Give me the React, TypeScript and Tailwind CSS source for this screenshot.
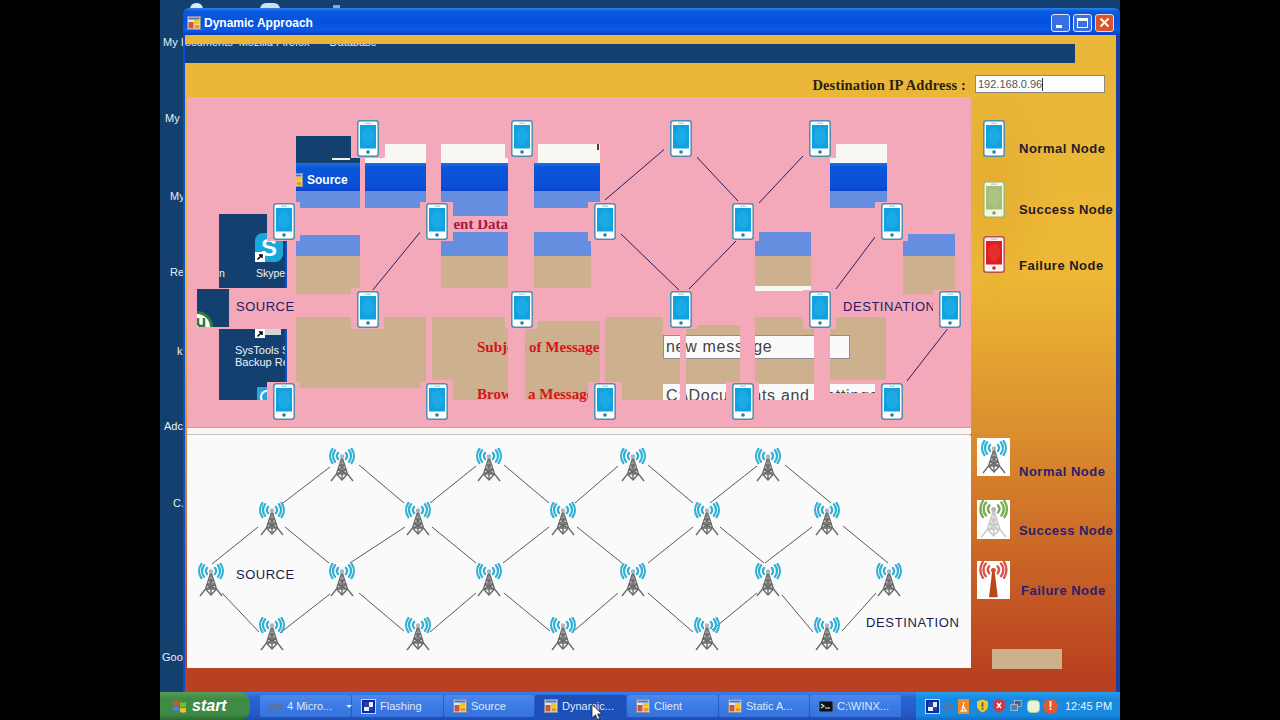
import React from "react";

const PHONE_COLORS = {
  blue: { edge: "#4b8fae", body: "#ffffff", screen: "#10a2e0", glow: "#2cb6ea", dot: "#1f7f9f" },
  green: { edge: "#a3b56e", body: "#f3f8e0", screen: "#a6bf78", glow: "#b9cc90", dot: "#88996a" },
  red: { edge: "#b9524a", body: "#fff2f0", screen: "#dc1f22", glow: "#ee4a40", dot: "#b9323a" },
};

function Phone({ tone = "blue" }: { tone?: "blue" | "green" | "red" }) {
  const c = PHONE_COLORS[tone];
  return (
    <svg width="22" height="37" viewBox="0 0 22 37" className="block shrink-0">
      <rect x="0.8" y="0.8" width="20.4" height="35.4" rx="2.5" fill={c.body} stroke={c.edge} strokeWidth="1.5" />
      <rect x="3" y="5" width="16" height="23.5" fill={c.screen} />
      <ellipse cx="11" cy="16.5" rx="6" ry="9" fill={c.glow} opacity="0.4" />
      <rect x="8" y="2.7" width="6" height="0.9" fill="#9fb7c2" />
      <circle cx="11" cy="32" r="1.8" fill={c.dot} />
    </svg>
  );
}

function Tower({ tone = "blue", size = 1 }: { tone?: "blue" | "green" | "red"; size?: number }) {
  const arc = tone === "blue" ? "#30b0d4" : tone === "green" ? "#79ad55" : "#d9534f";
  const steel = tone === "blue" ? "#6a6a6a" : tone === "green" ? "#c9c9c9" : "#b8481c";
  return (
    <svg width={28 * size} height={34 * size} viewBox="0 0 28 34" className="block">
      <g fill="none" stroke={arc} strokeWidth="2.2" strokeLinecap="round">
        <path d="M10.2 4.8A5 5 0 0 0 10.2 11.2" />
        <path d="M7.1 2.2A9 9 0 0 0 7.1 13.8" />
        <path d="M4.4 0.8A12.5 12.5 0 0 0 4.4 15.2" />
        <path d="M17.8 4.8A5 5 0 0 1 17.8 11.2" />
        <path d="M20.9 2.2A9 9 0 0 1 20.9 13.8" />
        <path d="M23.6 0.8A12.5 12.5 0 0 1 23.6 15.2" />
      </g>
      {tone === "red" ? (
        <path d="M12.8 10H15.2L18 33H10Z" fill={steel} />
      ) : (
        <g fill="none" stroke={steel} strokeWidth="1.4">
          <path d="M14 9L8.5 26L3 33" />
          <path d="M14 9L19.5 26L25 33" />
          <path d="M14 10V32" />
          <path d="M11.4 17H16.6M10 22H18M8.5 26H19.5" />
          <path d="M11.4 17L18 22M16.6 17L10 22M10 22L19.5 26M18 22L8.5 26M8.5 26L14 32L19.5 26" />
        </g>
      )}
      <circle cx="14" cy="8.5" r="2.2" fill={tone === "red" ? "#c9501e" : "#b4b4b4"} />
    </svg>
  );
}

function AppIcon() {
  return (
    <svg width="14" height="14" viewBox="0 0 14 14" className="block shrink-0">
      <rect x="0.5" y="0.5" width="13" height="13" fill="#dfe6f2" stroke="#7f8fa8" />
      <rect x="1.5" y="1.5" width="11" height="2" fill="#4a70b8" />
      <rect x="7" y="4" width="5.5" height="4.5" fill="#f6c21c" />
      <rect x="1.5" y="6" width="5" height="6.5" fill="#c9573a" />
      <rect x="7.5" y="9" width="5" height="3.5" fill="#e8962e" />
    </svg>
  );
}

function BlueBoxIcon() {
  return (
    <svg width="15" height="15" viewBox="0 0 15 15" className="block shrink-0">
      <rect x="0.5" y="0.5" width="14" height="14" fill="#0a2aa8" stroke="#c7d6f6" />
      <rect x="3" y="3" width="9" height="9" fill="#e9eefb" />
      <rect x="3" y="3" width="5" height="5" fill="#2a3f9c" />
      <rect x="8" y="8" width="4" height="4" fill="#2a3f9c" />
    </svg>
  );
}

function Glasses({ width = 14 }: { width?: number }) {
  return (
    <svg width={width} height="9" viewBox="0 0 14 9" className="block shrink-0">
      <g fill="none" stroke="#5f7192" strokeWidth="1.8">
        <circle cx="4" cy="5" r="2.6" />
        <circle cx="10.4" cy="4.4" r="2.6" />
      </g>
    </svg>
  );
}

function TaskButton({ w, active, icon, label, arrow }: { w: string; active?: boolean; icon: React.ReactNode; label: string; arrow?: boolean }) {
  return (
    <div
      className={`${w} h-[22px] rounded-[2px] flex items-center gap-[4px] pl-[9px] text-[11px] text-[#dfe8fb] shrink-0 ${
        active ? "bg-[#1d4fb8]" : "bg-[linear-gradient(180deg,#4a88ec_0%,#3c7be4_50%,#3672dc_100%)]"
      }`}
    >
      {icon}
      <span className="whitespace-nowrap">{label}</span>
      {arrow && <span className="ml-[10px] w-0 h-0 border-l-[3px] border-r-[3px] border-t-[3px] border-l-transparent border-r-transparent border-t-[#dfe8fb]" />}
    </div>
  );
}

const RECTS = [
  "left-[32px] top-[117px] w-[68px] h-[74px] bg-[#14406f] border-r-2 border-[#0a50c8]",
  "left-[10px] top-[192px] w-[32px] h-[38px] bg-[#14406f]",
  "left-[32px] top-[232px] w-[68px] h-[71px] bg-[#14406f] border-r-2 border-[#0a50c8]",
  "left-[109px] top-[39px] w-[55px] h-[27px] bg-[#14406f]",
  "left-[164px] top-[60px] w-[9px] h-[6px] bg-[#14406f]",
  "left-[198px] top-[47px] w-[41px] h-[19px] bg-[#f8f7f4]",
  "left-[178px] top-[60px] w-[20px] h-[6px] bg-[#f8f7f4]",
  "left-[254px] top-[47px] w-[67px] h-[19px] bg-[#f8f7f4]",
  "left-[351px] top-[47px] w-[62px] h-[19px] bg-[#f8f7f4]",
  "left-[649px] top-[47px] w-[51px] h-[19px] bg-[#f8f7f4]",
  "left-[643px] top-[60px] w-[6px] h-[6px] bg-[#f8f7f4]",
  "left-[109px] top-[66px] w-[64px] h-[28px] bg-[linear-gradient(180deg,#1f72ea_0%,#0a56d8_15%,#0a50d8_80%,#0a45c8_100%)]",
  "left-[178px] top-[66px] w-[61px] h-[28px] bg-[linear-gradient(180deg,#1f72ea_0%,#0a56d8_15%,#0a50d8_80%,#0a45c8_100%)]",
  "left-[254px] top-[66px] w-[67px] h-[28px] bg-[linear-gradient(180deg,#1f72ea_0%,#0a56d8_15%,#0a50d8_80%,#0a45c8_100%)]",
  "left-[347px] top-[66px] w-[66px] h-[28px] bg-[linear-gradient(180deg,#1f72ea_0%,#0a56d8_15%,#0a50d8_80%,#0a45c8_100%)]",
  "left-[643px] top-[66px] w-[57px] h-[28px] bg-[linear-gradient(180deg,#1f72ea_0%,#0a56d8_15%,#0a50d8_80%,#0a45c8_100%)]",
  "left-[109px] top-[94px] w-[64px] h-[17px] bg-[#668ee0]",
  "left-[178px] top-[94px] w-[61px] h-[17px] bg-[#668ee0]",
  "left-[254px] top-[94px] w-[67px] h-[17px] bg-[#668ee0]",
  "left-[265px] top-[111px] w-[56px] h-[8px] bg-[#668ee0]",
  "left-[347px] top-[94px] w-[66px] h-[17px] bg-[#668ee0]",
  "left-[643px] top-[94px] w-[57px] h-[17px] bg-[#668ee0]",
  "left-[109px] top-[138px] w-[64px] h-[21px] bg-[#668ee0]",
  "left-[254px] top-[135px] w-[67px] h-[24px] bg-[#668ee0]",
  "left-[347px] top-[135px] w-[57px] h-[24px] bg-[#668ee0]",
  "left-[568px] top-[135px] w-[56px] h-[24px] bg-[#668ee0]",
  "left-[716px] top-[137px] w-[52px] h-[22px] bg-[#668ee0]",
  "left-[109px] top-[159px] w-[64px] h-[32px] bg-[#cdb08e]",
  "left-[109px] top-[191px] w-[55px] h-[6px] bg-[#cdb08e]",
  "left-[254px] top-[159px] w-[67px] h-[32px] bg-[#cdb08e]",
  "left-[347px] top-[159px] w-[57px] h-[32px] bg-[#cdb08e]",
  "left-[568px] top-[159px] w-[56px] h-[30px] bg-[#cdb08e]",
  "left-[568px] top-[189px] w-[56px] h-[5px] bg-[#f8f7f4]",
  "left-[716px] top-[159px] w-[52px] h-[38px] bg-[#cdb08e]",
  "left-[109px] top-[220px] w-[130px] h-[71px] bg-[#cdb08e]",
  "left-[245px] top-[220px] w-[76px] h-[63px] bg-[#cdb08e]",
  "left-[265px] top-[283px] w-[56px] h-[20px] bg-[#cdb08e]",
  "left-[338px] top-[224px] w-[75px] h-[79px] bg-[#cdb08e]",
  "left-[418px] top-[220px] w-[58px] h-[66px] bg-[#cdb08e]",
  "left-[435px] top-[262px] w-[58px] h-[41px] bg-[#cdb08e]",
  "left-[499px] top-[228px] w-[54px] h-[75px] bg-[#cdb08e]",
  "left-[568px] top-[220px] w-[59px] h-[83px] bg-[#cdb08e]",
  "left-[643px] top-[220px] w-[56px] h-[63px] bg-[#cdb08e]",
];

const STRIPS = [
  "left-[321px] top-[220px] w-[17px] h-[83px]",
  "left-[493px] top-[231px] w-[6px] h-[72px]",
  "left-[553px] top-[220px] w-[15px] h-[83px]",
  "left-[627px] top-[220px] w-[16px] h-[83px]",
  "left-[643px] top-[296px] w-[46px] h-[7px]",
];

const PHONES: [number, number][] = [
  [367, 138], [521, 138], [680, 138], [819, 138],
  [283, 221], [436, 221], [604, 221], [742, 221], [891, 221],
  [367, 309], [521, 309], [680, 309], [819, 309], [949, 309],
  [283, 401], [436, 401], [604, 401], [742, 401], [891, 401],
];

const PHONE_LINES = [
  [372, 291, 426, 225], [605, 200, 667, 147], [693, 153, 738, 201], [759, 203, 803, 156],
  [620, 233, 680, 291], [737, 240, 689, 289], [875, 237, 836, 289], [949, 327, 907, 381],
];

const TOWERS: [number, number][] = [
  [342, 465], [489, 465], [633, 465], [768, 465],
  [272, 519], [418, 519], [563, 519], [707, 519], [827, 519],
  [211, 580], [342, 580], [489, 580], [633, 580], [768, 580], [889, 580],
  [272, 634], [418, 634], [563, 634], [707, 634], [827, 634],
];

const TOWER_LINES = [
  [283, 503, 330, 467], [359, 465, 404, 503], [430, 503, 476, 466], [504, 465, 549, 503],
  [575, 503, 618, 466], [648, 465, 693, 503], [710, 503, 757, 466], [785, 465, 831, 503],
  [212, 564, 258, 527], [285, 527, 329, 563], [350, 563, 405, 527], [432, 527, 476, 563],
  [503, 563, 549, 527], [577, 527, 622, 563], [648, 563, 693, 527], [720, 527, 764, 563],
  [765, 563, 812, 527], [843, 526, 888, 563],
  [222, 593, 259, 632], [280, 633, 330, 594], [359, 593, 404, 631], [430, 632, 476, 593],
  [504, 593, 550, 631], [575, 630, 618, 593], [648, 593, 693, 632], [712, 630, 757, 593],
  [782, 595, 813, 632], [842, 631, 876, 593],
];

const SIDE_LABELS: [number, number, string][] = [
  [3, 35, "My I"],
  [5, 111, "My"],
  [10, 189, "My"],
  [10, 265, "Re"],
  [17, 344, "k"],
  [4, 419, "Adc"],
  [13, 496, "C."],
  [2, 650, "Goo"],
];

export default function App() {
  return (
    <div className="w-[1280px] h-[720px] bg-black flex justify-center overflow-hidden font-['Liberation_Sans',sans-serif]">
      <div className="w-[960px] h-[720px] flex flex-col relative">
        {/* desktop with the window on it */}
        <div className="relative h-[692px] bg-[#14406f] overflow-hidden">
          <div className="absolute left-[30px] top-[3px] w-[13px] h-[6px] rounded-t-full bg-[#dfe8f0]" />
          <div className="absolute left-[100px] top-[3px] w-[20px] h-[6px] rounded-t-full bg-[#cfdfee]" />
          <div className="absolute left-[173px] top-[5px] w-[7px] h-[4px] bg-[#8fa8c4]" />
          {SIDE_LABELS.map(([left, top, text]) => (
            <span key={top} style={{ left, top }} className="absolute text-[11px] leading-[14px] text-[#e8eef6]">
              {text}
            </span>
          ))}

          <div className="absolute left-[23px] top-[8px] w-[937px] h-[684px] flex flex-col">
            {/* title bar */}
            <div className="h-[27px] shrink-0 rounded-t-[6px] flex items-center pt-[3px] pl-[4px] pr-[6px] bg-[linear-gradient(180deg,#2a80f0_0%,#0a5be0_12%,#0551dd_50%,#0a5ae8_80%,#0a3fc0_100%)]">
              <AppIcon />
              <span className="ml-[3px] text-[12px] font-bold text-white">Dynamic Approach</span>
              <div className="ml-auto flex gap-[3px] -mt-[1px]">
                <div className="relative w-[19px] h-[18px] rounded-[3px] border border-[#dfe8fb] bg-[#3a6fe0]">
                  <div className="absolute left-[4px] bottom-[3px] w-[6px] h-[3px] bg-white" />
                </div>
                <div className="w-[19px] h-[18px] rounded-[3px] border border-[#dfe8fb] bg-[#3a6fe0] flex items-center justify-center">
                  <div className="w-[11px] h-[10px] border border-white border-t-[3px]" />
                </div>
                <div className="w-[19px] h-[18px] rounded-[3px] border border-[#f0d8d0] bg-[#d9552e] flex items-center justify-center">
                  <svg width="11" height="11" viewBox="0 0 11 11">
                    <path d="M1.5 1.5L9.5 9.5M9.5 1.5L1.5 9.5" stroke="#fff" strokeWidth="2" />
                  </svg>
                </div>
              </div>
            </div>

            {/* window body */}
            <div className="flex-1 flex flex-col border-l-2 border-r-4 border-l-[#0a4fd8] border-r-[#1b3ea0] bg-[linear-gradient(180deg,#e9b63a_0%,#edb835_37%,#db8f2e_60%,#cc6a28_77%,#b9411f_97%)]">
              <div className="h-[9px] shrink-0" />
              <div className="h-[19px] w-[890px] shrink-0 bg-[#14406f] overflow-hidden text-[11px] leading-[14px] text-[#e8eef6] flex">
                <span className="-mt-[9px]">ocuments</span>
                <span className="-mt-[9px] ml-[6px]">Mozilla Firefox</span>
                <span className="-mt-[9px] ml-[20px]">Database</span>
              </div>

              <div className="h-[34px] shrink-0 flex justify-end items-center pt-[8px] pr-[11px]">
                <span className="mt-[3px] font-['Liberation_Serif',serif] font-bold text-[14.5px] tracking-[0.15px] text-[#2a1f10]">Destination IP Address :</span>
                <div className="ml-[9px] w-[130px] h-[18px] bg-white border border-[#8a8a80] flex items-center pl-[2px] text-[11px] text-[#555]">
                  192.168.0.96<span className="w-px h-[13px] bg-[#333]" />
                </div>
              </div>

              <div className="flex-1 flex">
                {/* left column: the two diagrams */}
                <div className="ml-[2px] w-[784px] shrink-0 flex flex-col">
                  <div className="relative h-[330px] shrink-0 bg-[#f4a9bb] overflow-hidden">
                    {RECTS.map((c) => (
                      <div key={c} className={`absolute ${c}`} />
                    ))}

                    {/* leftovers of the Source form */}
                    <div className="absolute left-[109px] top-[69px] h-[28px] flex items-center gap-[2px]">
                      <div className="w-[7px] h-[14px] overflow-hidden flex justify-end"><AppIcon /></div>
                      <span className="ml-[2px] text-[12px] font-bold text-white">Source</span>
                    </div>
                    <div className="absolute left-[145px] top-[61px] w-[18px] h-[2px] bg-[#f0f0e8]" />
                    <div className="absolute left-[410px] top-[47px] w-[2px] h-[6px] bg-[#6a3a20]" />

                    {/* desktop icons seen through */}
                    <div className="absolute left-[68px] top-[136px] w-[28px] h-[29px] rounded-[8px] bg-[#1aa7d9] flex items-center justify-center text-white font-bold text-[24px] leading-none">S</div>
                    <div className="absolute left-[68px] top-[155px] w-[10px] h-[10px] bg-white flex items-center justify-center">
                      <svg width="8" height="8" viewBox="0 0 8 8"><path d="M1.5 6.5L5.5 2.5M3 2H6V5" stroke="#000" strokeWidth="1.5" fill="none" /></svg>
                    </div>
                    <span className="absolute left-[69px] top-[169px] text-[10.5px] leading-[14px] text-[#eef3f8]">Skype</span>
                    <span className="absolute left-[32px] top-[169px] text-[10.5px] leading-[14px] text-[#eef3f8]">n</span>
                    <div className="absolute left-[72px] top-[232px] w-[22px] h-[6px] bg-[#cfd6dc]" />
                    <div className="absolute left-[68px] top-[232px] w-[10px] h-[9px] bg-white flex items-center justify-center">
                      <svg width="8" height="8" viewBox="0 0 8 8"><path d="M1.5 6.5L5.5 2.5M3 2H6V5" stroke="#000" strokeWidth="1.5" fill="none" /></svg>
                    </div>
                    <div className="absolute left-[48px] top-[247px] w-[50px] overflow-hidden text-[11px] leading-[12px] text-[#eef3f8] whitespace-nowrap text-right">SysTools S</div>
                    <div className="absolute left-[48px] top-[259px] w-[50px] overflow-hidden text-[11px] leading-[12px] text-[#eef3f8] whitespace-nowrap text-right">Backup Rec</div>
                    <div className="absolute left-[70px] top-[290px] w-[11px] h-[13px] bg-[#2aa4e0] overflow-hidden">
                      <div className="w-[14px] h-[14px] rounded-full border-2 border-white ml-[3px] mt-[3px]" />
                    </div>
                    <svg className="absolute left-[10px] top-[212px]" width="16" height="18" viewBox="0 0 16 18">
                      <circle cx="0" cy="18" r="14.5" fill="#fff" stroke="#2f7d3c" strokeWidth="3" />
                      <path d="M1 9V14Q1 17 4 17H7V9" fill="none" stroke="#2f7d3c" strokeWidth="2.5" />
                    </svg>

                    {/* red form labels, cut by the strips */}
                    <div className="absolute left-[265px] top-[123px] w-[56px] h-[10px] overflow-hidden">
                      <span className="absolute right-0 -top-[4px] whitespace-nowrap font-['Liberation_Serif',serif] font-bold text-[15px] leading-[16px] text-[#a81840]">Recipient Data</span>
                    </div>
                    <div className="absolute left-[290px] top-[191px] w-[28px] h-[3px] overflow-hidden">
                      <span className="absolute left-0 top-0 whitespace-nowrap font-['Liberation_Serif',serif] font-bold text-[15px] leading-[16px] text-[#d8121c]">Destinat</span>
                    </div>
                    <div className="absolute left-[366px] top-[191px] w-[36px] h-[3px] overflow-hidden">
                      <span className="absolute right-0 top-0 whitespace-nowrap font-['Liberation_Serif',serif] font-bold text-[15px] leading-[16px] text-[#d8121c]">IP Add</span>
                    </div>
                    <span className="absolute left-[290px] top-[242px] whitespace-nowrap font-['Liberation_Serif',serif] font-bold text-[15px] leading-[16px] text-[#d8121c]">Subject of Message</span>
                    <span className="absolute left-[290px] top-[289px] whitespace-nowrap font-['Liberation_Serif',serif] font-bold text-[15px] leading-[16px] text-[#d8121c]">Browse a Message</span>

                    {/* inputs */}
                    <div className="absolute left-[476px] top-[238px] w-[187px] h-[24px] bg-[#fafafa] border border-[#8d8d96] pl-[2px] text-[16px] leading-[22px] tracking-[0.7px] text-[#444]">new message</div>
                    <div className="absolute left-[476px] top-[287px] w-[212px] h-[16px] bg-[#fafafa] overflow-hidden pl-[3px] pt-[3px] text-[16px] leading-[18px] tracking-[0.7px] text-[#444] whitespace-nowrap">C:\Documents and Settings</div>

                    {STRIPS.map((c) => (
                      <div key={c} className={`absolute bg-[#f4a9bb] ${c}`} />
                    ))}

                    <span className="absolute left-[49px] top-[202px] text-[13px] leading-[16px] tracking-[0.5px] text-[#251a60]">SOURCE</span>
                    <span className="absolute left-[656px] top-[202px] whitespace-nowrap text-[13px] leading-[16px] tracking-[0.55px] text-[#251a60]">DESTINATION</span>

                    <svg className="absolute left-0 top-0" width="784" height="330" viewBox="187 97 784 330">
                      {PHONE_LINES.map((l) => (
                        <line key={l.join()} x1={l[0]} y1={l[1]} x2={l[2]} y2={l[3]} stroke="#2a1a5a" strokeWidth="1" />
                      ))}
                    </svg>

                    {PHONES.map(([x, y]) => (
                      <div
                        key={`${x}-${y}`}
                        style={{ left: x - 187 - 16, top: y - 97 - 19 }}
                        className="absolute w-[33px] h-[39px] pl-[6px] bg-[#f4a9bb] flex items-center"
                      >
                        <Phone />
                      </div>
                    ))}
                  </div>

                  <div className="h-px shrink-0 bg-[#e0a060]" />
                  <div className="h-[6px] shrink-0 bg-[#fbf5ee]" />

                  <div className="relative h-[234px] shrink-0 bg-[#fafafa] border-t border-[#c4c4c0] rounded-tr-[3px]">
                    <svg className="absolute left-0 top-0" width="784" height="233" viewBox="187 435 784 233">
                      {TOWER_LINES.map((l) => (
                        <line key={l.join()} x1={l[0]} y1={l[1]} x2={l[2]} y2={l[3]} stroke="#5a5a5a" strokeWidth="1" />
                      ))}
                    </svg>
                    {TOWERS.map(([x, y]) => (
                      <div key={`${x}-${y}`} style={{ left: x - 187 - 14, top: y - 434 - 18 }} className="absolute">
                        <Tower />
                      </div>
                    ))}
                    <span className="absolute left-[49px] top-[132px] text-[13px] leading-[16px] tracking-[0.5px] text-[#1a1a50]">SOURCE</span>
                    <span className="absolute left-[679px] top-[180px] whitespace-nowrap text-[13px] leading-[16px] tracking-[0.65px] text-[#1a1a50]">DESTINATION</span>
                  </div>
                </div>

                {/* right column: legends */}
                <div className="flex-1 flex flex-col bg-[radial-gradient(ellipse_60px_120px_at_22px_90px,rgba(190,120,30,0.16),transparent)]">
                  <div className="mt-[23px] ml-[12px] h-[37px] flex gap-[14px]">
                    <Phone />
                    <span className="self-end font-bold text-[13px] leading-[16px] tracking-[0.5px] text-[#241a28]">Normal Node</span>
                  </div>
                  <div className="mt-[24px] ml-[12px] h-[37px] flex gap-[14px]">
                    <Phone tone="green" />
                    <span className="self-end font-bold text-[13px] leading-[16px] tracking-[0.45px] text-[#241a28] whitespace-nowrap">Success Node</span>
                  </div>
                  <div className="mt-[18px] ml-[12px] h-[38px] flex gap-[14px]">
                    <Phone tone="red" />
                    <span className="self-end font-bold text-[13px] leading-[16px] tracking-[0.5px] text-[#241a28]">Failure Node</span>
                  </div>

                  <div className="mt-[164px] ml-[6px] h-[42px] flex gap-[9px]">
                    <div className="w-[33px] h-[38px] bg-white flex items-center justify-center shrink-0"><Tower /></div>
                    <span className="self-end font-bold text-[13px] leading-[16px] tracking-[0.5px] text-[#2a1f6a]">Normal Node</span>
                  </div>
                  <div className="mt-[20px] ml-[6px] h-[39px] flex gap-[9px]">
                    <div className="w-[33px] h-[39px] bg-white flex items-center justify-center shrink-0"><Tower tone="green" size={1.12} /></div>
                    <span className="self-end font-bold text-[13px] leading-[16px] tracking-[0.45px] text-[#2a1f6a] whitespace-nowrap">Success Node</span>
                  </div>
                  <div className="mt-[22px] ml-[6px] h-[38px] flex gap-[11px]">
                    <div className="w-[33px] h-[38px] bg-white flex items-center justify-center shrink-0"><Tower tone="red" size={1.1} /></div>
                    <span className="self-end font-bold text-[13px] leading-[16px] tracking-[0.5px] text-[#2a1f6a]">Failure Node</span>
                  </div>

                  <div className="mt-[50px] ml-[21px] w-[70px] h-[20px] bg-[#cdb08e]" />
                </div>
              </div>
            </div>
          </div>
        </div>

        {/* taskbar */}
        <div className="h-[28px] shrink-0 flex items-center bg-[linear-gradient(180deg,#3f7fe8_0%,#2a62d4_20%,#2558c8_80%,#1f4cb0_100%)]">
          <div className="w-[90px] h-[28px] shrink-0 rounded-r-[10px] flex items-center pl-[12px] gap-[5px] bg-[linear-gradient(180deg,#5a9a5a_0%,#3f8a44_25%,#3f8a44_80%,#2c6a30_100%)]">
            <svg width="15" height="15" viewBox="0 0 15 15" className="shrink-0">
              <path d="M1 2.5Q4 1 7 2.5V7Q4 5.5 1 7Z" fill="#d8532c" />
              <path d="M8 3Q11 4.5 14 3V7.5Q11 9 8 7.5Z" fill="#7fb93a" />
              <path d="M1 8Q4 6.5 7 8V12.5Q4 11 1 12.5Z" fill="#4a80d8" />
              <path d="M8 8.5Q11 10 14 8.5V13Q11 14.5 8 13Z" fill="#f2c02a" />
            </svg>
            <span className="text-[16px] font-bold italic text-white">start</span>
          </div>
          <div className="ml-[10px] flex gap-[1px] items-center">
            <TaskButton w="w-[91px]" icon={<Glasses />} label="4 Micro..." arrow />
            <TaskButton w="w-[91px]" icon={<BlueBoxIcon />} label="Flashing" />
            <TaskButton w="w-[90px]" icon={<AppIcon />} label="Source" />
            <TaskButton w="w-[91px]" active icon={<AppIcon />} label="Dynamic..." />
            <TaskButton w="w-[91px]" icon={<AppIcon />} label="Client" />
            <TaskButton w="w-[90px]" icon={<AppIcon />} label="Static A..." />
            <TaskButton w="w-[91px]" icon={
              <svg width="14" height="11" viewBox="0 0 14 11" className="block shrink-0">
                <rect width="14" height="11" fill="#111" stroke="#ccc" strokeWidth="0.5" />
                <path d="M2 3L5 5L2 7M6 7H11" stroke="#eee" strokeWidth="1.1" fill="none" />
              </svg>
            } label="C:\WINX..." />
          </div>
          <div className="ml-auto w-[204px] h-[28px] flex items-center pl-[9px] bg-[linear-gradient(180deg,#2a9cea_0%,#178ae0_25%,#178ae0_80%,#1270c8_100%)] shrink-0">
            <BlueBoxIcon />
            <div className="ml-[2px]"><Glasses width={11} /></div>
            <svg width="11" height="15" viewBox="0 0 11 15" className="block shrink-0 ml-[5px]">
              <rect width="11" height="15" fill="#ee8a2c" />
              <path d="M2 12H9M4 12L6 3M5 7L8 12" stroke="#fff" strokeWidth="1.1" fill="none" />
            </svg>
            <svg width="11" height="14" viewBox="0 0 12 14" className="block shrink-0 ml-[8px]">
              <path d="M6 0L12 2V7Q12 11 6 14Q0 11 0 7V2Z" fill="#f2c92a" />
              <rect x="5" y="3" width="2" height="5" fill="#555" />
              <rect x="5" y="9" width="2" height="2" fill="#555" />
            </svg>
            <svg width="12" height="14" viewBox="0 0 12 14" className="block shrink-0 ml-[5px]">
              <path d="M6 0L12 2V7Q12 11 6 14Q0 11 0 7V2Z" fill="#c9384a" />
              <path d="M4 4L8 9M8 4L4 9" stroke="#fff" strokeWidth="1.4" />
            </svg>
            <svg width="12" height="14" viewBox="0 0 14 14" className="block shrink-0 ml-[5px]">
              <rect x="5" y="0.5" width="8" height="7" fill="#4c5f80" stroke="#d4dce8" strokeWidth="0.7" />
              <rect x="1" y="5.5" width="8" height="6.5" fill="#6a7c9a" stroke="#d4dce8" strokeWidth="0.7" />
            </svg>
            <div className="ml-[5px] w-[13px] h-[13px] rounded-[4px] bg-[#e8f4d8] border border-[#a8d090] shrink-0" />
            <div className="ml-[3px] w-[15px] h-[15px] rounded-full bg-[#e8562c] text-white text-[12px] leading-[15px] font-bold text-center shrink-0">!</div>
            <span className="ml-[7px] text-[11px] text-[#e8f2fc] whitespace-nowrap">12:45 PM</span>
          </div>
        </div>

        <svg className="absolute left-[431px] top-[704px]" width="12" height="16" viewBox="0 0 12 16">
          <path d="M1 0.5V14L4.4 10.8L6.6 15.5L8.8 14.5L6.6 10H11Z" fill="#fff" stroke="#222" strokeWidth="0.8" />
        </svg>
      </div>
    </div>
  );
}
